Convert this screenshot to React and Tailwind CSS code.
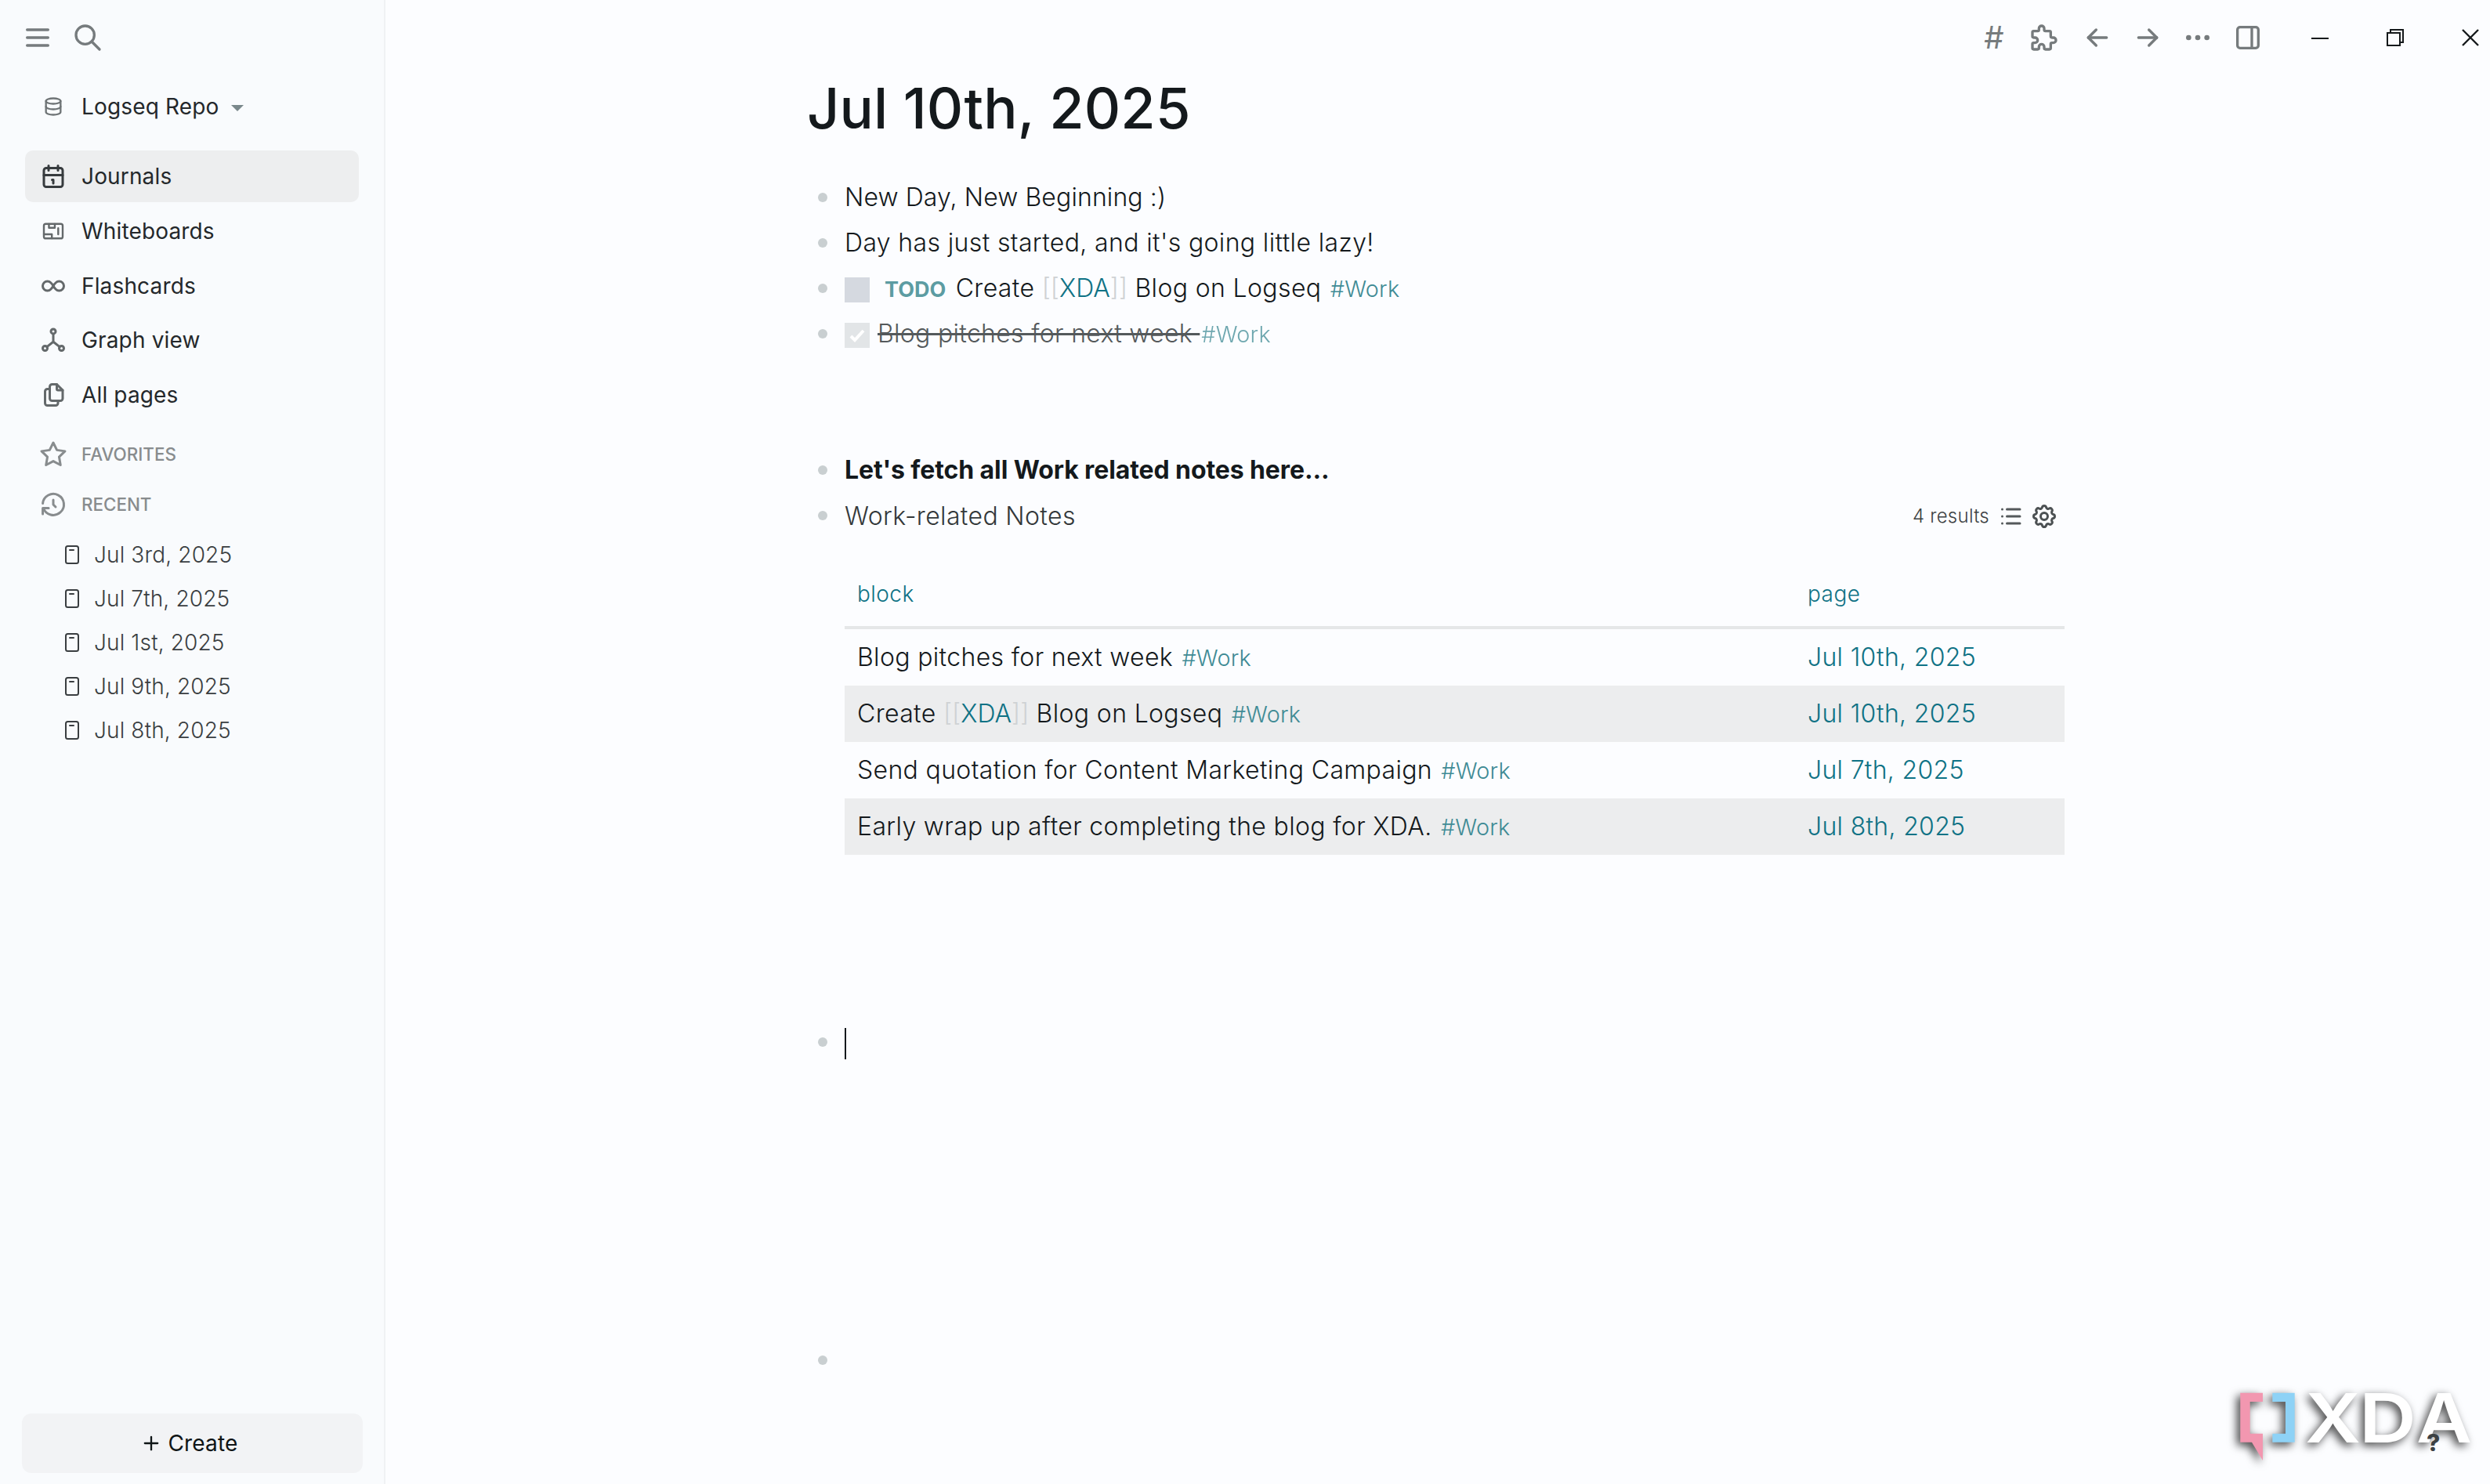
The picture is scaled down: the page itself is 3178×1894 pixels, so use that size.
import React from 'react';
import {
  TbMenu2, TbSearch, TbDatabase, TbInfinity, TbFiles, TbStar, TbHistory,
  TbPuzzle, TbArrowLeft, TbArrowRight, TbDots, TbLayoutSidebarRight,
  TbList, TbSettings, TbPlus
} from 'react-icons/tb';

const CalendarIcon = ({ className }) => (
  <svg viewBox="0 0 24 24" className={className} fill="none" stroke="currentColor" strokeWidth="2" strokeLinecap="round" strokeLinejoin="round">
    <rect x="4" y="5" width="16" height="16" rx="2" />
    <path d="M8 3v4M16 3v4M4 11h16M11 15h1v3" />
  </svg>
);

const WhiteboardIcon = ({ className }) => (
  <svg viewBox="0 0 24 24" className={className} fill="none" stroke="currentColor" strokeWidth="1.6" strokeLinecap="round" strokeLinejoin="round">
    <rect x="4" y="5.8" width="16" height="12.4" rx="1.6" />
    <path d="M8.3 6v3.2h5V6M4 14.7h6.8v3.3M16.2 9.5v5.2" />
  </svg>
);

const GraphIcon = ({ className }) => (
  <svg viewBox="0 0 24 24" className={className} fill="none" stroke="currentColor" strokeWidth="2" strokeLinecap="round" strokeLinejoin="round">
    <circle cx="12" cy="4.6" r="2" />
    <circle cx="5" cy="19" r="2" />
    <circle cx="19" cy="19" r="2" />
    <path d="M12 6.6v6.9M6.6 17.8L12 13.5l5.4 4.3" />
  </svg>
);

const PageIcon = ({ className }) => (
  <svg viewBox="0 0 18 24" className={className} fill="none" stroke="currentColor" strokeWidth="2" strokeLinecap="round">
    <rect x="1" y="1" width="16" height="22" rx="2.5" />
    <path d="M6 6h5" />
  </svg>
);

const navItems = [
  { label: 'Journals', icon: CalendarIcon, active: true },
  { label: 'Whiteboards', icon: WhiteboardIcon },
  { label: 'Flashcards', icon: TbInfinity },
  { label: 'Graph view', icon: GraphIcon },
  { label: 'All pages', icon: TbFiles }
];

const recentPages = ['Jul 3rd, 2025', 'Jul 7th, 2025', 'Jul 1st, 2025', 'Jul 9th, 2025', 'Jul 8th, 2025'];

const PageRef = ({ children }) => (
  <>
    <span className="text-[#cfd2d4] tracking-normal">[[</span>
    <span className="text-[#0f7285] tracking-normal">{children}</span>
    <span className="text-[#cfd2d4] tracking-normal">]]</span>
  </>
);

const Tag = ({ children }) => <span className="ml-[2px] text-[28.8px] tracking-[0.2px] text-[#3f8b95]">#{children}</span>;

const results = [
  { block: <>Blog pitches for next week <Tag>Work</Tag></>, page: 'Jul 10th, 2025' },
  { block: <>Create <PageRef>XDA</PageRef> Blog on Logseq <Tag>Work</Tag></>, page: 'Jul 10th, 2025' },
  { block: <>Send quotation for Content Marketing Campaign <Tag>Work</Tag></>, page: 'Jul 7th, 2025' },
  { block: <>Early wrap up after completing the blog for XDA. <Tag>Work</Tag></>, page: 'Jul 8th, 2025' }
];

const Block = ({ children, className = '' }) => (
  <div className={`flex h-[58px] ${className}`}>
    <div className="w-3 h-3 mt-6 ml-[14px] mr-[22px] shrink-0 rounded-full bg-[#c9cfd1]" />
    <div className="flex-1 whitespace-pre leading-[60px]">{children}</div>
  </div>
);

const Sidebar = () => (
  <aside className="w-[492px] shrink-0 h-full flex flex-col bg-[#f9fbfd] border-r-2 border-[#f0f2f4] text-[28px] tracking-[0.15px] text-[#24282b]">
    <div className="flex h-24 pl-7 items-center gap-6 text-[#767b7d]">
      <TbMenu2 className="w-10 h-10" />
      <TbSearch className="w-10 h-10" />
    </div>
    <div className="flex items-center h-20 pl-[54px]">
      <TbDatabase className="w-7 h-7 text-[#6f7476]" />
      <span className="ml-[22px]">Logseq Repo</span>
      <svg viewBox="0 0 16 8" className="w-4 h-2 ml-[16px] mt-1 text-[#7a888b]">
        <path d="M0 0h16L8 8z" fill="currentColor" />
      </svg>
    </div>

    <nav className="mt-4 mx-8 flex flex-col gap-[3.8px]">
      {navItems.map(({ label, icon: Icon, active }) => (
        <div key={label} className={`flex items-center h-[66px] w-[426px] pl-[18px] rounded-[10px] ${active ? 'bg-[#edeeef]' : ''}`}>
          <Icon className={`w-9 h-9 ${active ? 'text-[#373b3e]' : 'text-[#64696b]'}`} />
          <span className="ml-[18px]">{label}</span>
        </div>
      ))}
    </nav>

    <div className="mt-[11px] pl-[50px] text-[22.4px] tracking-normal font-medium text-[#888c8e]">
      <div className="flex items-center h-16">
        <TbStar className="w-9 h-9" />
        <span className="ml-[18px]">FAVORITES</span>
      </div>
      <div className="flex items-center h-16">
        <TbHistory className="w-9 h-9" />
        <span className="ml-[18px]">RECENT</span>
      </div>
    </div>

    <ul className="mt-1 pl-[83px] font-light tracking-[0.15px] text-[#3a3e41]">
      {recentPages.map((page) => (
        <li key={page} className="flex items-center h-14">
          <PageIcon className="w-[18px] h-6" />
          <span className="ml-[19px]">{page}</span>
        </li>
      ))}
    </ul>

    <div className="mt-auto mb-[14px] ml-7 w-[435px] h-[76px] pr-[9px] rounded-[12px] bg-[#f2f3f5] flex items-center justify-center text-[#0f1517]">
      <TbPlus className="w-7 h-7" />
      <span className="ml-[8px]">Create</span>
    </div>
  </aside>
);

const TopBar = () => (
  <header className="flex h-24 items-center justify-end text-[#767b7d]">
    <div className="flex items-center gap-6 mr-[61px]">
      <span className="w-10 text-center text-[40px] leading-10">#</span>
      <TbPuzzle className="w-10 h-10" />
      <TbArrowLeft className="w-10 h-10 ml-1" />
      <TbArrowRight className="w-10 h-10" />
      <TbDots className="w-10 h-10" />
      <TbLayoutSidebarRight className="w-10 h-10" />
    </div>
    <div className="flex items-center gap-[74px] mr-[14px] text-[#15191b]">
      <svg viewBox="0 0 22 22" className="w-[22px] h-[22px]" fill="none" stroke="currentColor" strokeWidth="2">
        <path d="M0 12h22" />
      </svg>
      <svg viewBox="0 0 22 22" className="w-[22px] h-[22px]" fill="none" stroke="currentColor" strokeWidth="2">
        <path d="M1 5h16v16H1zM5 5V1h16v16h-4" />
      </svg>
      <svg viewBox="0 0 22 22" className="w-[22px] h-[22px]" fill="none" stroke="currentColor" strokeWidth="2.4">
        <path d="M1 1l20 20M21 1L1 21" />
      </svg>
    </div>
  </header>
);

const QueryTable = () => (
  <div className="ml-12 w-[1557px]">
    <div className="flex h-[88px] text-[28px] font-light tracking-[0.45px] text-[#0f7285] border-b-4 border-[#e5e7e8] leading-[86px]">
      <div className="w-[1213px] pl-4">block</div>
      <div className="pl-4">page</div>
    </div>
    {results.map(({ block, page }, i) => (
      <div key={i} className={`flex h-[72px] leading-[72px] font-light tracking-[0.34px] ${i % 2 ? 'bg-[#ecedee]' : ''}`}>
        <div className="w-[1213px] pl-4 whitespace-pre">{block}</div>
        <div className="pl-4 tracking-[0.3px] text-[#0f7285]">{page}</div>
      </div>
    ))}
  </div>
);

const Watermark = () => (
  <div className="absolute right-0 bottom-0">
    <svg viewBox="0 0 378 154" className="w-[378px] h-[154px]">
      <g className="drop-shadow-[-4px_4px_6px_rgba(0,0,0,0.75)]">
        <path fill="#f297b0" d="M59.3 37.7H88V49H71.7v40.7H88V124L74 100.7H59.3z" />
        <path fill="#8ed2f6" d="M100.3 37.7h28.4v63h-28.4v-11H117V49h-16.7z" />
        <g fill="#ffffff" fontFamily="Inter" fontWeight="600" fontSize="87">
          <text x="142" y="101" textLength="71" lengthAdjust="spacingAndGlyphs">X</text>
          <text x="211" y="101" textLength="73" lengthAdjust="spacingAndGlyphs">D</text>
          <text x="284" y="101" textLength="71" lengthAdjust="spacingAndGlyphs">A</text>
        </g>
      </g>
      <text x="297" y="112" fontFamily="Inter" fontWeight="800" fontSize="30" fill="#3c4144">?</text>
    </svg>
  </div>
);

const App = () => (
  <div className="relative flex w-full h-[1894px] overflow-hidden bg-[#fcfdff] font-['Inter',sans-serif]">
    <Sidebar />
    <main className="flex-1 flex flex-col">
      <TopBar />
      <div className="ml-[538px] w-[1605px] text-[32px] text-[#14191c]">
        <h1 className="h-[84px] leading-[84px] text-[72px] tracking-[0.15px] font-medium">Jul 10th, 2025</h1>
        <div className="pt-[42px] font-light tracking-[0.36px]">
          <Block className="tracking-[0.1px]">New Day, New Beginning :)</Block>
          <Block>Day has just started, and it's going little lazy!</Block>
          <Block>
            <span className="inline-block w-8 h-8 mr-[19px] align-[-7px] bg-[#d5d9e0]" />
            <span className="mr-[3px] text-[27px] font-bold tracking-normal text-[#5c9ca2]">TODO</span>
            {' '}Create <PageRef>XDA</PageRef> Blog on Logseq <Tag>Work</Tag>
          </Block>
          <Block>
            <span className="inline-block w-8 h-8 mr-[10px] align-[-7px] bg-[#e2e5e7]">
              <svg viewBox="0 0 32 32" className="block w-8 h-8" fill="none" stroke="#ffffff" strokeWidth="4">
                <path d="M8 17l5 5L24 10" />
              </svg>
            </span>
            <span className="text-[#54595b] tracking-[0.3px] line-through decoration-[3px]">Blog pitches for next week </span>
            <span className="opacity-75"><Tag>Work</Tag></span>
          </Block>
          <Block className="mt-[116px] font-bold tracking-[-0.1px]">Let's fetch all Work related notes here...</Block>
          <Block>
            <div className="flex items-center justify-between h-[62px] pr-[8px] text-[#33383a]">
              <span>Work-related Notes</span>
              <div className="flex items-center text-[24px] text-[#3c4143]">
                <span className="tracking-[0.25px]">4 results</span>
                <TbList className="w-9 h-9 ml-[9px] text-[#54595b]" />
                <TbSettings className="w-9 h-9 ml-[7px] text-[#4c5153]" />
              </div>
            </div>
          </Block>
        </div>
        <div className="mt-[29px]">
          <QueryTable />
        </div>
        <Block className="mt-[209px]">
          <span className="inline-block w-[2px] h-10 align-middle bg-[#14191c]" />
        </Block>
        <Block className="mt-[348px]" />
      </div>
    </main>
    <Watermark />
  </div>
);

export default App;
